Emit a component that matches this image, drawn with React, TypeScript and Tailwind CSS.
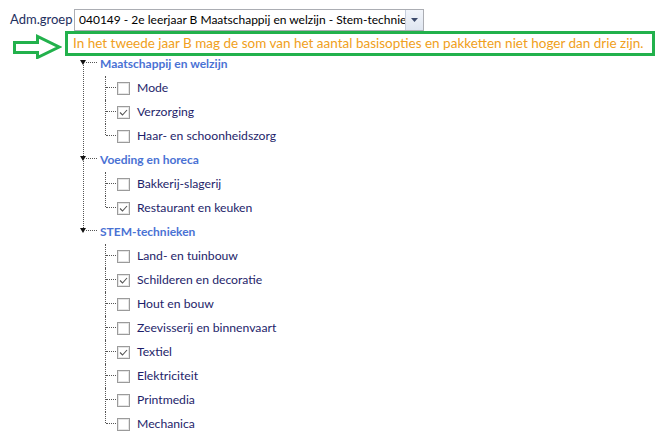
import React from "react";

type Group = { name: string; items: { label: string; checked: boolean }[] };

const groups: Group[] = [
  {
    name: "Maatschappij en welzijn",
    items: [
      { label: "Mode", checked: false },
      { label: "Verzorging", checked: true },
      { label: "Haar- en schoonheidszorg", checked: false },
    ],
  },
  {
    name: "Voeding en horeca",
    items: [
      { label: "Bakkerij-slagerij", checked: false },
      { label: "Restaurant en keuken", checked: true },
    ],
  },
  {
    name: "STEM-technieken",
    items: [
      { label: "Land- en tuinbouw", checked: false },
      { label: "Schilderen en decoratie", checked: true },
      { label: "Hout en bouw", checked: false },
      { label: "Zeevisserij en binnenvaart", checked: false },
      { label: "Textiel", checked: true },
      { label: "Elektriciteit", checked: false },
      { label: "Printmedia", checked: false },
      { label: "Mechanica", checked: false },
    ],
  },
];

function Checkbox({ checked }: { checked: boolean }) {
  return (
    <span className="relative w-[13px] h-[13px] border border-[#9b9b9b] bg-white shadow-[inset_0_0_0_1px_#e6e6e6] shrink-0">
      {checked && (
        <svg className="absolute left-0 top-0" width="11" height="11" viewBox="0 0 11 11">
          <path d="M2 5.5 L4.5 8 L9 3" fill="none" stroke="#555" strokeWidth="1.1" />
        </svg>
      )}
    </span>
  );
}

function TreeGroup({ g, last }: { g: Group; last: boolean }) {
  return (
    <div className="relative">
      {!last && (
        <span className="absolute left-[83px] top-[13px] bottom-[-8px] border-l border-dotted border-[#555]" />
      )}
      <div className="relative h-[24px] flex items-center">
        <svg className="absolute left-[80px] top-[8px]" width="6" height="5" viewBox="0 0 6 5">
          <polygon points="0,0 6,0 3,5" fill="#111" />
        </svg>
        <span className="absolute left-[86px] top-[10px] w-[11px] border-t border-dotted border-[#555]" />
        <span className="ml-[100px] font-bold text-[#4a72d4] text-[12px] leading-none">{g.name}</span>
      </div>
      {g.items.map((it, i) => {
        const isLast = i === g.items.length - 1;
        return (
          <div key={it.label} className="relative h-[24px] flex items-center">
            <span
              className={
                isLast
                  ? "absolute left-[105px] top-0 h-[11px] border-l border-dotted border-[#555]"
                  : "absolute left-[105px] top-0 h-[24px] border-l border-dotted border-[#555]"
              }
            />
            <span className="absolute left-[106px] top-[11px] w-[10px] border-t border-dotted border-[#555]" />
            <div className="ml-[117px] flex items-center gap-[7px]">
              <Checkbox checked={it.checked} />
              <span className="text-[12.2px] text-[#1e1e6a] leading-none">{it.label}</span>
            </div>
          </div>
        );
      })}
    </div>
  );
}

export default function App() {
  return (
    <div
      className="w-[658px] h-[435px] bg-white overflow-hidden relative"
      style={{ fontFamily: "Lato, 'Noto Sans', sans-serif" }}
    >
      <div className="flex items-center pt-[9px] pl-[10px] h-[31px]">
        <span className="text-[13px] text-[#1e2f5e] w-[64px]">Adm.groep</span>
        <div className="flex h-[22px] w-[350px] border border-[#abadb3] bg-white">
          <div className="flex-1 overflow-hidden whitespace-nowrap pl-[4px] text-[12px] text-black leading-[20px]">
            040149 - 2e leerjaar B Maatschappij en welzijn - Stem-technieken
          </div>
          <div className="w-[18px] h-full border-l border-[#c7cedb] bg-gradient-to-b from-[#f2f5fb] to-[#dfe6f1] flex items-center justify-center">
            <svg width="7" height="4" viewBox="0 0 7 4">
              <polygon points="0,0 7,0 3.5,4" fill="#3c4a6b" />
            </svg>
          </div>
        </div>
      </div>
      <div className="flex items-start pl-[12px] h-[25px]">
        <svg width="50" height="25" viewBox="0 0 50 25" className="mt-[3px]">
          <polygon
            points="2.5,8.5 25.5,8.5 25.5,2.5 47,13 25.5,23.5 25.5,18.5 2.5,18.5"
            fill="none"
            stroke="#22b14c"
            strokeWidth="3"
            strokeLinejoin="miter"
          />
        </svg>
        <div className="ml-[3px] w-[590px] h-[25px] border-[3px] border-[#22b14c] flex items-center pl-[5px]">
          <span className="text-[13.5px] text-[#f0a020] whitespace-nowrap leading-none">
            In het tweede jaar B mag de som van het aantal basisopties en pakketten niet hoger dan drie zijn.
          </span>
        </div>
      </div>
      <div className="-mt-[4px]">
        {groups.map((g, i) => (
          <TreeGroup key={g.name} g={g} last={i === groups.length - 1} />
        ))}
      </div>
    </div>
  );
}
